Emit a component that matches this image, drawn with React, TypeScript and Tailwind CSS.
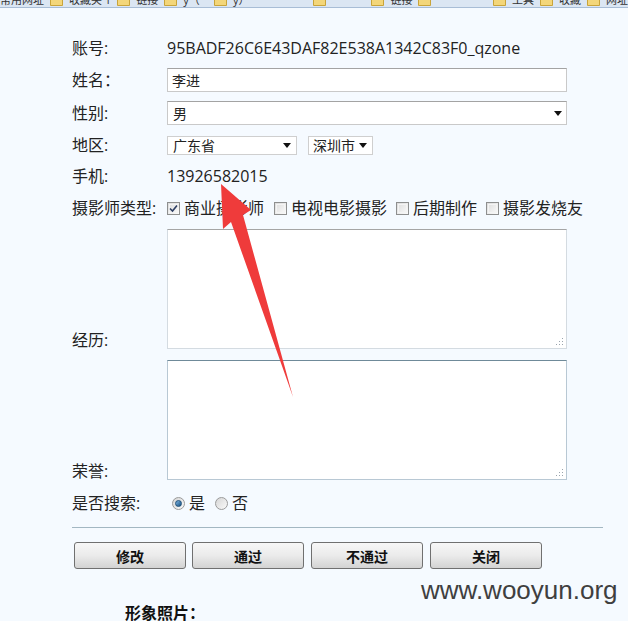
import React from "react";

const Folder = () => (
  <svg width="13" height="10" viewBox="0 0 13 10" className="shrink-0">
    <path d="M0.5 1.5 h4 l1.5 1.5 h6.5 v6.5 h-12 z" fill="#f3d67a" stroke="#c9a43a" />
  </svg>
);

const Grip = () => (
  <svg width="9" height="9" viewBox="0 0 9 9" className="absolute right-[2px] bottom-[2px]">
    <g fill="#9aa4ad">
      <rect x="7" y="1" width="1" height="1" />
      <rect x="4" y="4" width="1" height="1" />
      <rect x="7" y="4" width="1" height="1" />
      <rect x="1" y="7" width="1" height="1" />
      <rect x="4" y="7" width="1" height="1" />
      <rect x="7" y="7" width="1" height="1" />
    </g>
  </svg>
);

const Caret = () => (
  <svg width="8" height="5" viewBox="0 0 8 5" className="shrink-0">
    <path d="M0 0 H8 L4 5 Z" fill="#111" />
  </svg>
);

const Check = ({ checked }: { checked?: boolean }) => (
  <span className="relative inline-flex w-[13px] h-[13px] border border-[#8e8f8f] bg-gradient-to-br from-[#dcdcdc] to-[#fbfbfb] shrink-0 items-center justify-center">
    <span className="absolute inset-[1px] border border-[#f4f4f4]" />
    {checked && (
      <svg width="9" height="9" viewBox="0 0 9 9" className="relative">
        <path d="M1 4.5 L3.5 7 L8 1.5" stroke="#2d3e63" strokeWidth="1.6" fill="none" />
      </svg>
    )}
  </span>
);

const Radio = ({ checked }: { checked?: boolean }) => (
  <span className="inline-flex w-[13px] h-[13px] rounded-full border border-[#9a9a9a] bg-gradient-to-br from-[#d6d6d6] to-[#fafafa] items-center justify-center shrink-0">
    {checked && <span className="w-[7px] h-[7px] rounded-full bg-gradient-to-br from-[#7fb6e6] to-[#12507f] border border-[#1d4f78]" />}
  </span>
);

const Btn = ({ children, className = "" }: { children: React.ReactNode; className?: string }) => (
  <div className={"w-[112px] h-[27px] rounded-[3px] border border-[#707070] bg-gradient-to-b from-[#f7f7f7] via-[#ebebeb] to-[#d3d3d3] flex items-center justify-center pt-[2px] text-[14px] font-bold text-[#111] font-['Noto_Sans_CJK_SC',sans-serif] " + className}>
    {children}
  </div>
);

export default function App() {
  const label = "w-[95px] shrink-0 text-[16px] text-[#222]";
  return (
    <div className="relative w-[628px] h-[621px] overflow-hidden bg-[#f5faff] font-['Open_Sans','Noto_Sans_CJK_SC',sans-serif] text-[#222]">
      {/* cropped bookmark bar */}
      <div className="h-[8px] bg-[#dbe6f3] border-b border-[#a8bdd6] overflow-hidden">
        <div className="flex items-end gap-[6px] -mt-[7px] pl-0 text-[11px] leading-[13px] text-[#333] whitespace-nowrap">
          <span>常用网址</span>
          <Folder />
          <span>收藏夹 1</span>
          <Folder />
          <span>链接</span>
          <Folder />
          <span className="w-[30px]">y（</span>
          <Folder />
          <span className="w-[90px]">y）</span>
          <Folder />
          <span className="w-[40px]"> </span>
          <Folder />
          <span>链接</span>
          <Folder />
          <span className="w-[60px]"> </span>
          <Folder />
          <span>工具</span>
          <Folder />
          <span>收藏</span>
          <Folder />
          <span>网址</span>
        </div>
      </div>

      <div className="pl-[72px]">
        <div className="flex items-center h-[28px] mt-[26px]">
          <div className={label}>账号:</div>
          <div className="text-[16px]">95BADF26C6E43DAF82E538A1342C83F0_qzone</div>
        </div>
        <div className="flex items-center h-[36px]">
          <div className={label}>姓名：</div>
          <div className="w-[400px] h-[24px] bg-white border border-[#c9c9c9] border-t-[#a3a3a3] flex items-center px-[4px] text-[14px]">李进</div>
        </div>
        <div className="flex items-center h-[30px]">
          <div className={label}>性别:</div>
          <div className="w-[400px] h-[24px] bg-white border border-[#c9c9c9] border-t-[#a3a3a3] flex items-center justify-between pl-[5px] pr-[4px] text-[14px]">
            <span>男</span>
            <Caret />
          </div>
        </div>
        <div className="flex items-center h-[34px]">
          <div className={label}>地区:</div>
          <div className="w-[130px] h-[19px] bg-white border border-[#cfcfcf] flex items-center justify-between pl-[5px] pr-[5px] text-[14px]">
            <span>广东省</span>
            <Caret />
          </div>
          <div className="ml-[11px] w-[65px] h-[19px] bg-white border border-[#cfcfcf] flex items-center justify-between pl-[4px] pr-[5px] text-[14px]">
            <span>深圳市</span>
            <Caret />
          </div>
        </div>
        <div className="flex items-center h-[28px]">
          <div className={label}>手机:</div>
          <div className="text-[16px]">13926582015</div>
        </div>
        <div className="flex items-center h-[36px]">
          <div className={label}>摄影师类型:</div>
          <div className="flex items-center text-[16px] gap-[4px]">
            <Check checked />
            <span>商业摄影师</span>
            <span className="w-[2px]" />
            <Check />
            <span>电视电影摄影</span>
            <span className="w-[1px]" />
            <Check />
            <span>后期制作</span>
            <span className="w-[1px]" />
            <Check />
            <span>摄影发烧友</span>
          </div>
        </div>
        <div className="flex items-end mt-[3px]">
          <div className={label + " mb-[-3px]"}>经历:</div>
          <div className="relative w-[400px] h-[120px] bg-white border border-[#d4dbe1] border-t-[#a5a5a5]">
            <Grip />
          </div>
        </div>
        <div className="flex items-end mt-[11px]">
          <div className={label + " mb-[-3px]"}>荣誉:</div>
          <div className="relative w-[400px] h-[120px] bg-white border border-[#b8c8d4] border-t-[#6f8a99]">
            <Grip />
          </div>
        </div>
        <div className="flex items-center h-[28px] mt-[9px]">
          <div className={label}>是否搜索:</div>
          <div className="flex items-center gap-[4px] text-[16px] pl-[5px]">
            <Radio checked />
            <span>是</span>
            <span className="w-[2px]" />
            <Radio />
            <span>否</span>
          </div>
        </div>
        <div className="w-[531px] h-[1px] bg-[#a3b7c2] mt-[10px]" />
        <div className="flex pl-[2px] mt-[14px]">
          <Btn>修改</Btn>
          <Btn className="ml-[6px]">通过</Btn>
          <Btn className="ml-[7px]">不通过</Btn>
          <Btn className="ml-[7px]">关闭</Btn>
        </div>
        <div className="pl-[53px] mt-[31px] text-[16px] font-bold font-['Noto_Sans_CJK_SC',sans-serif] text-[#111]">形象照片：</div>
      </div>

      {/* watermark */}
      <div className="absolute left-[421px] top-[575px] text-[26px] leading-[30px] text-[#3f3f3f] font-['Liberation_Sans',sans-serif]">
        www.wooyun.org
      </div>

      {/* red arrow annotation */}
      <svg className="absolute inset-0 pointer-events-none" width="628" height="621" viewBox="0 0 628 621">
        <polygon points="221,184 251,210 243,215 293,397 231,222 223,229" fill="#ef3b3b" />
      </svg>
    </div>
  );
}
